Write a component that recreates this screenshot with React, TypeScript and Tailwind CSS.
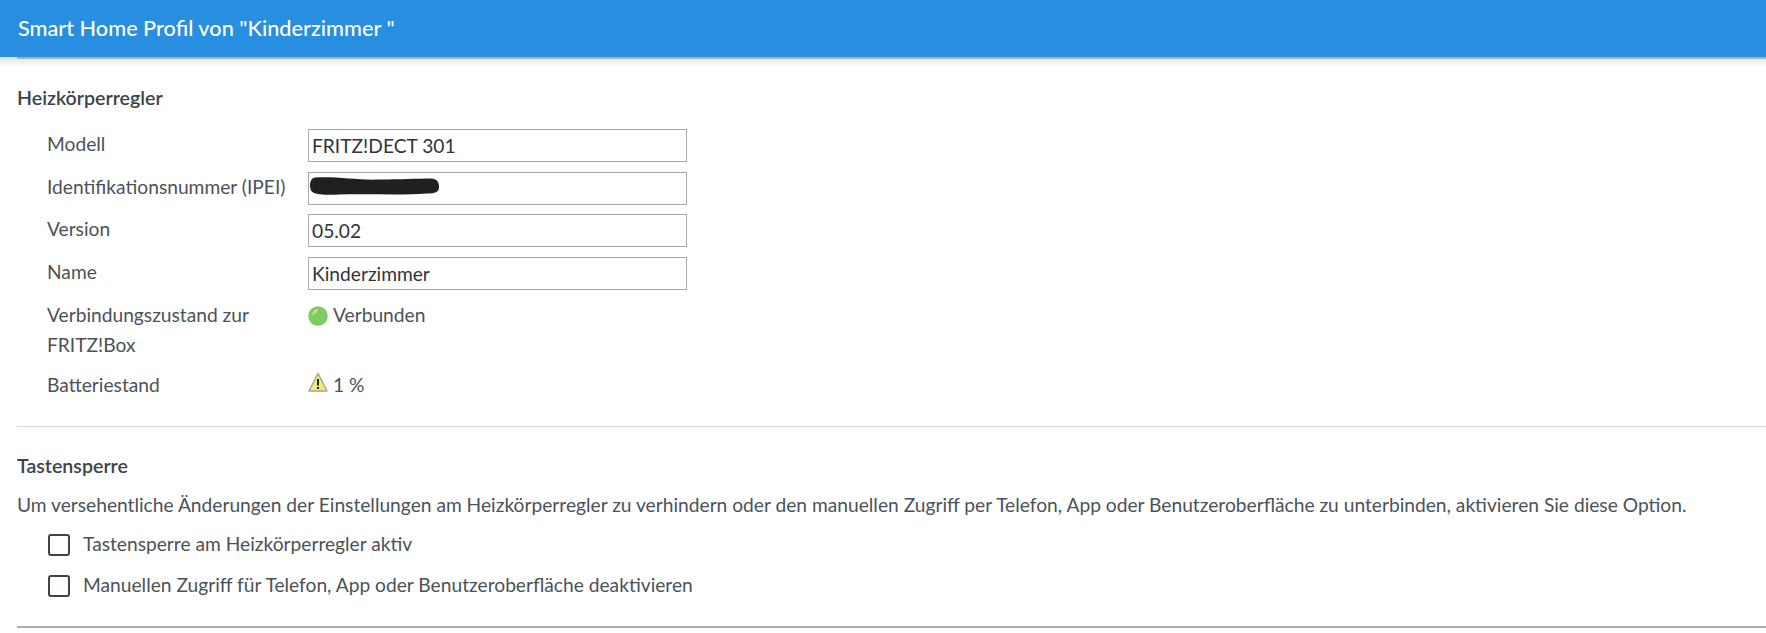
// App.tsx

const labelClass = 'w-[291px] shrink-0 pl-[30px] leading-[29px]';
const inputClass =
  'h-[33px] w-[379px] border border-[#a9a9a9] bg-white px-[3px] text-[19.2px] text-[#2f3437] outline-none';

function GreenDot() {
  return (
    <svg width="20" height="20" viewBox="0 0 20 20" className="mr-[5px] shrink-0">
      <circle cx="10" cy="10" r="9.8" fill="#7fcb5f" />
      <path d="M4 9 Q5 4 10 2.5 Q10 7 4 9Z" fill="#c8d8b8" />
    </svg>
  );
}

function WarningIcon() {
  return (
    <svg width="20" height="22" viewBox="0 0 20 22" className="mb-[5px] mr-[5px] shrink-0">
      <path d="M10 1.5 L19 19 H1 Z" fill="#f1ec7c" stroke="#a3a58c" strokeWidth="1.4" strokeLinejoin="round" />
      <rect x="9" y="7" width="2" height="6.5" fill="#23251c" />
      <rect x="9" y="15" width="2" height="2" fill="#23251c" />
    </svg>
  );
}

function Row({ label, value, redacted }: { label: string; value: string; redacted?: boolean }) {
  return (
    <div className="flex h-[42.5px] items-start">
      <div className={labelClass}>{label}</div>
      <div className="relative">
        <input readOnly value={value} className={inputClass} />
        {redacted && (
          <svg width="130" height="20" viewBox="0 0 130 19" className="absolute left-[1px] top-[4px]">
            <path
              d="M6 1 C30 0 50 4 70 3 C90 3 110 2 122 2 C128 2 130 6 130 10 C130 16 126 17 118 17 C90 19 60 17 30 18 C15 19 4 18 2 14 C0 8 1 2 6 1Z"
              fill="#1f2020"
            />
          </svg>
        )}
      </div>
    </div>
  );
}

function CheckRow({ label }: { label: string }) {
  return (
    <label className="flex h-[41px] items-center pl-[31px]">
      <span className="mr-[13px] box-border h-[22px] w-[22px] rounded-[3px] border-2 border-[#3c4448] bg-white" />
      <span>{label}</span>
    </label>
  );
}

export default function App() {
  return (
    <div className="min-h-[633px] bg-white font-['Lato','Noto_Sans',sans-serif] text-[19.2px] text-[#4b5257]">
      <header className="flex h-[57px] items-center bg-[#278ee0] pb-[1px] pl-[18px] text-[21.7px] font-medium text-white">
        Smart Home Profil von "Kinderzimmer "
      </header>
      <div className="h-[10px] bg-gradient-to-b from-[#dfe1e1] to-white">
        <div className="ml-[17px] h-[2px] bg-[#a9b0ad]" />
      </div>

      <main className="pl-[17px]">
        <h2 className="mt-[16px] text-[19.6px] font-semibold leading-[30px] text-[#3c4448]">Heizkörperregler</h2>

        <div className="mt-[16px]">
          <Row label="Modell" value="FRITZ!DECT 301" />
          <Row label="Identifikationsnummer (IPEI)" value="" redacted />
          <Row label="Version" value="05.02" />
          <Row label="Name" value="Kinderzimmer" />
          <div className="flex pt-[1px]">
            <div className="w-[291px] shrink-0 pl-[30px] pr-[40px] leading-[30px]">
              Verbindungszustand zur FRITZ!Box
            </div>
            <div className="flex h-[31px] items-center">
              <GreenDot />
              Verbunden
            </div>
          </div>
          <div className="mt-[10px] flex">
            <div className={labelClass}>Batteriestand</div>
            <div className="flex h-[31px] items-center">
              <WarningIcon />1 %
            </div>
          </div>
        </div>

        <hr className="mt-[25px] border-0 border-t border-[#d5d8d8]" />

        <h2 className="mt-[24px] text-[19.6px] font-semibold leading-[30px] text-[#3c4448]">Tastensperre</h2>
        <p className="mt-[9px] leading-[30px]">
          Um versehentliche Änderungen der Einstellungen am Heizkörperregler zu verhindern oder den manuellen Zugriff per
          Telefon, App oder Benutzeroberfläche zu unterbinden, aktivieren Sie diese Option.
        </p>

        <div className="mt-[4px]">
          <CheckRow label="Tastensperre am Heizkörperregler aktiv" />
          <CheckRow label="Manuellen Zugriff für Telefon, App oder Benutzeroberfläche deaktivieren" />
        </div>

        <div className="mt-[20px] h-[2px] bg-[#a9b0ad]" />
      </main>
    </div>
  );
}
